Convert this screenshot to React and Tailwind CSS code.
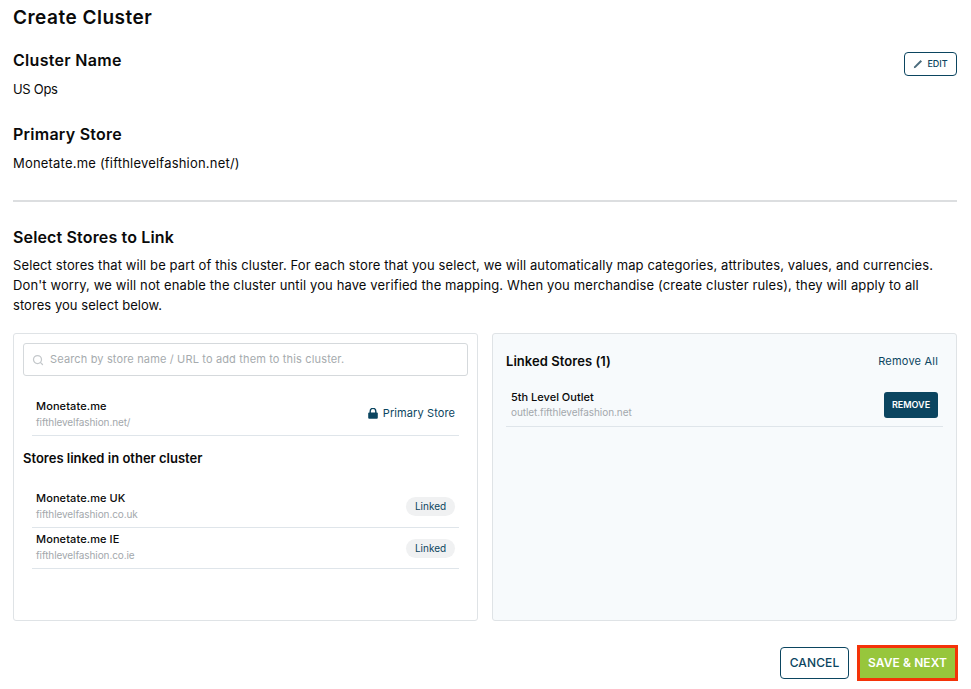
import React from "react";
import { Search } from "lucide-react";

const navy = "text-[#0b4560]";

function StoreRow({ name, url, children, rowClass }) {
  return (
    <div className={`flex items-center justify-between border-b border-[#dfe5ea] pl-1 pr-1 ${rowClass}`}>
      <div className="flex flex-col">
        <span className="text-[11px] leading-[16px] font-medium text-[#0a0a0a] tracking-[0.1px]">{name}</span>
        <span className="text-[10px] leading-[16px] text-[#a3a8ac] tracking-[-0.1px]">{url}</span>
      </div>
      {children}
    </div>
  );
}

function Badge({ className = "" }) {
  return (
    <span className={`flex h-[19px] w-[49px] items-center justify-center rounded-full bg-[#f0f1f2] text-[10px] ${navy} ${className}`}>
      Linked
    </span>
  );
}

function LockIcon() {
  return (
    <svg width="10" height="11" viewBox="0 0 10 11" className="text-[#0b4560]" aria-hidden="true">
      <path d="M2.2 5V3.2a2.8 2.8 0 0 1 5.6 0V5" fill="none" stroke="currentColor" strokeWidth="1.4" />
      <rect x="0.2" y="4.6" width="9.6" height="6.2" rx="1" fill="currentColor" />
    </svg>
  );
}

function PencilIcon() {
  return (
    <svg width="10" height="10" viewBox="0 0 10 10" className="text-[#4a6b7c]" aria-hidden="true">
      <path d="M0.8 9.2 L1.2 7.4 L7.6 1 L9 2.4 L2.6 8.8 Z" fill="currentColor" />
    </svg>
  );
}

export default function App() {
  return (
    <div className="flex h-[689px] w-[971px] flex-col overflow-hidden bg-white pl-[13px] pr-[14px] font-['Inter',sans-serif] text-[#0a0a0a]">
      <h1 className="mt-[7px] text-[19px] leading-[21px] font-semibold tracking-[0.5px]">Create Cluster</h1>

      <div className="mt-[22px] flex items-start justify-between">
        <div className="flex flex-col">
          <h2 className="text-[16px] leading-[20px] font-semibold tracking-[0.3px]">Cluster Name</h2>
          <p className="mt-[10px] text-[13px] leading-[18px] tracking-[-0.3px]">US Ops</p>
        </div>
        <button className={`mt-[2px] flex h-[24px] w-[53px] items-center justify-center gap-[4px] rounded-[4px] border border-[#0b4560] text-[9px] font-medium ${navy}`}>
          <PencilIcon />
          EDIT
        </button>
      </div>

      <h2 className="mt-[26px] text-[16px] leading-[20px] font-semibold tracking-[0.25px]">Primary Store</h2>
      <p className="mt-[10px] text-[13px] leading-[18px] tracking-[0.2px]">Monetate.me (fifthlevelfashion.net/)</p>

      <hr className="mt-[28px] border-t-2 border-[#dcdee0]" />

      <h2 className="mt-[25px] text-[16px] leading-[20px] font-semibold tracking-[0.15px]">Select Stores to Link</h2>
      <div className="mt-[8px] text-[13px] leading-[20px]">
        <p className="tracking-[0.11px]">Select stores that will be part of this cluster. For each store that you select, we will automatically map categories, attributes, values, and currencies.</p>
        <p className="tracking-[0.12px]">Don't worry, we will not enable the cluster until you have verified the mapping. When you merchandise (create cluster rules), they will apply to all</p>
        <p className="tracking-[0.05px]">stores you select below.</p>
      </div>

      <div className="mt-[18px] flex h-[288px] gap-[14px]">
        <section className="flex w-[465px] flex-col rounded-[3px] border border-[#dfe3e6] px-[9px] pt-[9px]">
          <div className="flex h-[33px] items-center gap-[6px] rounded-[3px] border border-[#d5d9dc] px-[8px]">
            <Search size={12} strokeWidth={2.5} className="text-[#c4c8cb]" />
            <span className="text-[11px] tracking-[0.15px] text-[#a6abae]">Search by store name / URL to add them to this cluster.</span>
          </div>

          <div className="mx-[9px] mt-[14px]">
            <StoreRow name="Monetate.me" url="fifthlevelfashion.net/" rowClass="h-[46px] pt-[3px]">
              <span className={`mb-[2px] flex items-center gap-[5px] text-[11px] tracking-[0.1px] ${navy}`}>
                <LockIcon />
                Primary Store
              </span>
            </StoreRow>
          </div>

          <h3 className="mt-[13px] text-[13px] leading-[18px] font-semibold">Stores linked in other cluster</h3>

          <div className="mx-[9px] mt-[20px]">
            <StoreRow name="Monetate.me UK" url="fifthlevelfashion.co.uk" rowClass="h-[41px] pb-[2px]">
              <Badge />
            </StoreRow>
            <StoreRow name="Monetate.me IE" url="fifthlevelfashion.co.ie" rowClass="h-[41px] pb-[2px]">
              <Badge className="mt-[2px]" />
            </StoreRow>
          </div>
        </section>

        <section className="flex flex-1 flex-col rounded-[3px] border border-[#dfe3e6] bg-[#f7fafc] px-[13px] pt-[17px]">
          <div className="flex items-center justify-between pr-[5px]">
            <h3 className="text-[13px] leading-[20px] font-semibold tracking-[0.05px]">Linked Stores (1)</h3>
            <span className={`text-[11px] tracking-[0.2px] ${navy}`}>Remove All</span>
          </div>
          <div className="mt-[11px] flex h-[45px] items-center justify-between border-b border-[#dfe5ea] pl-[5px] pr-[5px] pt-[2px]">
            <div className="mb-[2px] flex flex-col">
              <span className="text-[11px] leading-[16px] font-medium">5th Level Outlet</span>
              <span className="text-[10px] leading-[14px] tracking-[-0.07px] text-[#a3a8ac]">outlet.fifthlevelfashion.net</span>
            </div>
            <button className="flex h-[26px] w-[54px] items-center justify-center rounded-[3px] bg-[#0b4560] text-[9px] font-semibold text-white">
              REMOVE
            </button>
          </div>
        </section>
      </div>

      <div className="mt-[24px] flex items-center justify-end gap-[8px]">
        <button className={`h-[32px] w-[69px] rounded-[4px] border border-[#0b4560] text-[12px] font-medium tracking-[0.1px] ${navy}`}>CANCEL</button>
        <button className="mr-[-1px] h-[36px] w-[101px] border-[3px] border-[#f43308] bg-[#97c63c] text-[12px] font-semibold tracking-[0.1px] text-white">
          SAVE &amp; NEXT
        </button>
      </div>
    </div>
  );
}
